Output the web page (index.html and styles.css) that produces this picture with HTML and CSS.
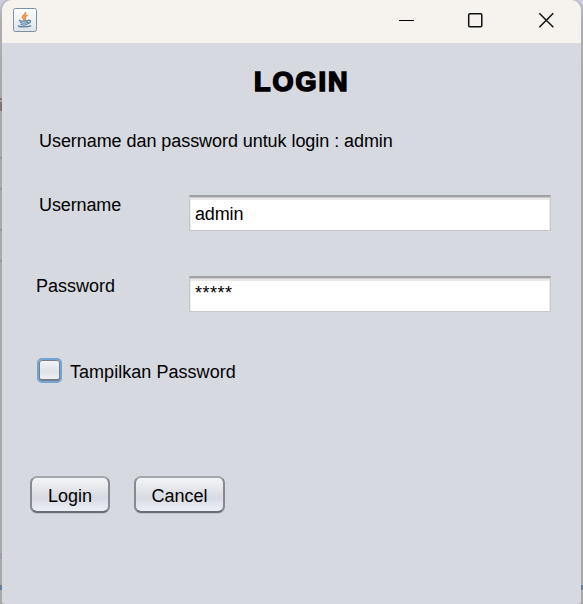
FILE: index.html
```html
<!DOCTYPE html>
<html lang="id">
<head>
<meta charset="utf-8">
<title>Login</title>
<link rel="stylesheet" href="styles.css">
</head>
<body>
<div class="desktop">
  <main class="window">
    <header class="titlebar">
      <svg class="java" width="24" height="24" viewBox="0 0 24 24">
        <defs><linearGradient id="tile" x2="0" y2="1"><stop offset="0" stop-color="#fff"/><stop offset="1" stop-color="#dfe3e6"/></linearGradient></defs>
        <rect x=".5" y=".5" width="23" height="23" rx="1.8" fill="url(#tile)" stroke="#7893a6"/>
        <g fill="none" stroke-linecap="round">
          <path d="M12.500 4.700c.5 2.300-3.700 2.800-3 4.800.4.900 1.400 1.400 1.500 2.200M14 7.500c-2.700 1-2.400 1.900-1.700 2.600.5.600.2 1-.3 1.500" stroke="#ee8a35" stroke-width="1.600"/>
          <path d="M6.500 12.300c-.5 1.200 7 1.100 9.300 0M7.500 14.500c1.500.8 5.300.8 7.200 0M8 16.500c1.300.7 4.200.7 5.800 0M15.500 12.300c3-.7 2.500 2.600-.5 3.200M5.500 18c1 1.200 9 1.200 12.200-.2" stroke="#557f9f" stroke-width="1.300"/>
        </g>
      </svg>
      <svg class="controls" width="156" height="16" viewBox="0 0 156 16" fill="none" stroke="#111" stroke-width="1.500">
        <path d="M0 8.500h15" stroke-width="1" stroke="#000"/>
        <rect x="69.700" y="1.700" width="13.100" height="13.100" rx="1.200"/>
        <path d="M140.300 1.300l14 14M154.300 1.300l-14 14"/>
      </svg>
    </header>
    <form class="form">
      <h1>LOGIN</h1>
      <p class="hint">Username dan password untuk login : admin</p>
      <div class="row">
        <label class="name" for="user">Username</label>
        <input id="user" type="text" value="admin">
      </div>
      <div class="row password">
        <label class="name" for="pass">Password</label>
        <input id="pass" type="text" value="*****">
      </div>
      <label class="show"><span class="box"></span><span class="caption">Tampilkan Password</span></label>
      <div class="actions">
        <button type="button" class="login">Login</button>
        <button type="button" class="cancel">Cancel</button>
      </div>
    </form>
  </main>
</div>
</body>
</html>
```
FILE: styles.css
```css
* { box-sizing: border-box; }
body { margin: 0; font: 18px/20px "Liberation Sans", Arial, sans-serif; color: #000; }
.desktop {
  width: 583px; height: 604px; overflow: hidden; padding: 0 2px;
  background:
    linear-gradient(#35658f, #35658f) 0 585px / 100% 5px no-repeat,
    linear-gradient(#9992a8, #9992a8) 0 553px / 2px 6px no-repeat,
    linear-gradient(#914e25, #914e25) 0 102px / 1px 9px no-repeat,
    linear-gradient(#414763, #414763) 1px 102px / 1px 9px no-repeat,
    linear-gradient(#71534b, #71534b) 0 98px / 2px 2px no-repeat,
    linear-gradient(#898989, #898989) 0 157px / 2px 2px no-repeat,
    linear-gradient(#898989, #898989) 0 188px / 2px 2px no-repeat,
    linear-gradient(#898989, #898989) 0 229px / 2px 2px no-repeat,
    linear-gradient(#898989, #898989) 0 260px / 2px 2px no-repeat,
    linear-gradient(#d0cfe5, #b1b1b5 20px, #a9a9a9 80px);
}
.window { height: 604px; background: #d6d9e0; border-radius: 10px 10px 3px 3px; overflow: hidden; box-shadow: 0 0 0 2px #a9a9a966; }
.titlebar { height: 43px; background: #f6f2ed; display: flex; justify-content: space-between; align-items: flex-start; padding: 8px 26px 0 11px; }
.controls { margin-top: 4px; }
.form { display: flex; flex-direction: column; }
h1 { margin: 25px 0 0 252px; width: 110px; font: bold 27px/28px "Liberation Sans", sans-serif; letter-spacing: 2px; -webkit-text-stroke: 1.7px #000; }
.hint { margin: 35px 0 0 37px; letter-spacing: -0.06px; }
.row { display: flex; align-items: flex-start; height: 36px; margin-top: 44px; padding-left: 37px; }
.row.password { margin-top: 45px; padding-left: 34px; }
.name { width: 150px; letter-spacing: -0.12px; }
.password .name { width: 153px; letter-spacing: 0; }
input {
  width: 362px; height: 36px; margin: 0; padding: 1px 4px 0 5px;
  border: 1px solid #c6c8cb; border-top: 2px solid #a0a1a4; border-radius: 0;
  background: #fff; box-shadow: inset 0 1px 0 #ccc, inset 0 3px 0 #e8e8e8, inset 1px 0 0 #e9e9e9, inset -1px 0 0 #e9e9e9;
  font: inherit; letter-spacing: -0.15px; color: #000; outline: none;
}
.password input { padding: 0 4px 2px 5px; letter-spacing: 0.5px; }
.show { display: flex; align-items: flex-start; gap: 8px; margin: 46px 0 0 35px; height: 26px; }
.caption { padding-top: 4px; letter-spacing: 0.04px; }
.box { width: 25px; height: 25px; border: 2px solid #73a4d1; border-radius: 5px; background: linear-gradient(#f5f6f7, #dfe2e6 55%, #f1f3f5); box-shadow: inset 0 0 0 1px #777e87, inset 0 -2px 0 #73777e; }
.actions { display: flex; gap: 24px; margin: 92px 0 0 28px; }
button { height: 37px; padding: 2px 0 0; border: 2px solid #858990; border-top-color: #a3a6ac; border-bottom-color: #686c73; border-radius: 7px; background: linear-gradient(#f3f5f7, #d7dae1 60%, #edf0f6); font: inherit; color: #000; box-shadow: 0 1px 0 #c3c6cc; }
.login { width: 80px; }
.cancel { width: 91px; }
```
